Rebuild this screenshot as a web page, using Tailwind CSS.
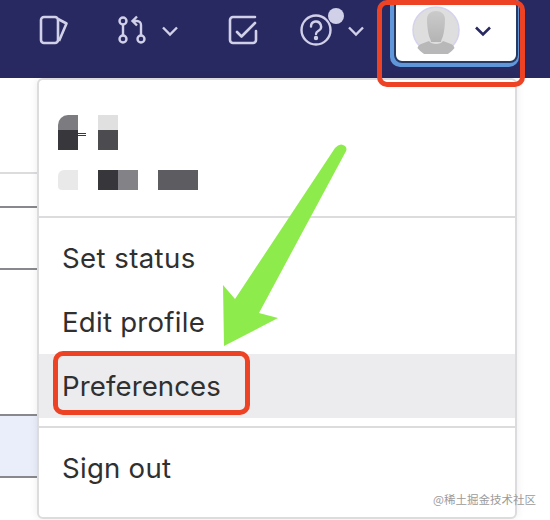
<!DOCTYPE html>
<html>
<head>
<script src="https://cdn.jsdelivr.net/npm/@tailwindcss/browser@4"></script>
</head>
<body class="bg-white">
<div class="relative w-[550px] h-[520px] overflow-hidden bg-white font-['Inter','Liberation_Sans',sans-serif] text-[#303030]">
  <!-- background table rows -->
  <div class="absolute left-0 top-[172px] w-[37px] h-[2px] bg-[#dcdcde]"></div>
  <div class="absolute left-0 top-[206px] w-[37px] h-[2px] bg-[#89888d]"></div>
  <div class="absolute left-0 top-[268px] w-[37px] h-[2px] bg-[#89888d]"></div>
  <div class="absolute left-0 top-[414px] w-[37px] h-[64px] bg-[#e9eefa] border-y-2 border-[#89888d]"></div>

  <!-- nav -->
  <header class="h-[78px] bg-[#292961] flex items-start text-[#d1d0e9]">
    <svg class="absolute left-[38px] top-[15px]" width="32" height="30" viewBox="0 0 32 30" fill="none" stroke="currentColor" stroke-width="2.6" stroke-linejoin="round"><rect x="3" y="2" width="17" height="26" rx="3"/><path d="M20 4l8.500 4.500L21 26"/></svg>
    <svg class="absolute left-[116px] top-[14px]" width="32" height="32" viewBox="0 0 32 32" fill="none" stroke="currentColor" stroke-width="2.400"><circle cx="7" cy="7" r="3.500"/><circle cx="7" cy="25" r="3.500"/><circle cx="25" cy="25" r="3.500"/><path d="M7 10.500v11M25 21.500V11a4 4 0 0 0-4-4h-3M21 2.500L16.500 7l4.500 4.500"/></svg>
    <svg class="absolute left-[161px] top-[25px]" width="18" height="12" viewBox="0 0 18 12" fill="none" stroke="currentColor" stroke-width="2.400"><path d="M2 2.500l7 7 7-7"/></svg>
    <svg class="absolute left-[227px] top-[15px]" width="32" height="30" viewBox="0 0 32 30" fill="none" stroke="currentColor" stroke-width="2.600" stroke-linecap="round" stroke-linejoin="round"><path d="M28 2H6a3 3 0 0 0-3 3v20a3 3 0 0 0 3 3h20a3 3 0 0 0 3-3v-9"/><path d="M10 17l4.500 4.500L28 8"/></svg>
    <svg class="absolute left-[299px] top-[13px]" width="34" height="34" viewBox="0 0 34 34" fill="none" stroke="currentColor" stroke-width="2.400" stroke-linecap="round"><circle cx="17" cy="17" r="14.500"/><path d="M12 13.500a5 5 0 1 1 7.500 4.300c-1.500.9-2.500 1.500-2.500 3.200"/><circle cx="17" cy="25" r="1" fill="currentColor"/></svg>
    <span class="absolute left-[328px] top-[8px] w-4 h-4 rounded-full bg-[#d1d0e9]"></span>
    <svg class="absolute left-[347px] top-[25px]" width="18" height="12" viewBox="0 0 18 12" fill="none" stroke="currentColor" stroke-width="2.400"><path d="M2 2.500l7 7 7-7"/></svg>

    <!-- user button -->
    <div class="absolute left-[390px] top-[-6px] w-[129px] h-[73px] rounded-[10px] bg-[#6097db] p-[4px] pr-[1px]">
      <div class="h-[65px] rounded-[8px] bg-white border-2 border-[#263a63] flex items-center pl-[16px] gap-[14px]">
        <svg class="mt-[-1px]" width="48" height="48" viewBox="0 0 48 48"><defs><linearGradient id="a" x1="0" y1="0" x2="0" y2="1"><stop offset="0" stop-color="#cbcbcb"/><stop offset="1" stop-color="#b4b4b4"/></linearGradient></defs><circle cx="24" cy="24" r="23" fill="#dedede" stroke="#d4d2ee" stroke-width="1.500"/><path d="M15 13c0-5 4-8 9-8s9 3 9 8c0 7-1 13-2 17-1 3-2 4-2 6h-10c0-2-1-3-2-6-1-4-2-10-2-17z" fill="url(#a)"/><path d="M17 35c1 2 4 3 7 3s6-1 7-3l8 3c2 1 3 2 3.500 4a23 23 0 0 1-37 0c.5-2 1.500-3 3.500-4z" fill="#b8b8b8"/></svg>
        <svg width="18" height="12" viewBox="0 0 18 12" fill="none" stroke="#292961" stroke-width="2.600"><path d="M2 2.500l7 7 7-7"/></svg>
      </div>
    </div>
  </header>

  <!-- dropdown -->
  <div class="absolute left-[37px] top-[78px] w-[480px] h-[441px] bg-white rounded-[6px] border-2 border-[#dcdcde] shadow-[0_0_8px_rgba(0,0,0,0.08)] flex flex-col">
    <div class="h-[138px] relative border-b-2 border-[#dcdcde] shrink-0">
      <!-- blurred name blocks -->
      <div class="absolute left-[19px] top-[35px] w-5 h-[15px] bg-[#7c7b80] rounded-tl-[10px]"></div>
      <div class="absolute left-[19px] top-[50px] w-5 h-5 bg-[#38373c]"></div>
      <div class="absolute left-[39px] top-[53px] w-2 h-px bg-[#38373c]"></div>
      <div class="absolute left-[39px] top-[55px] w-2 h-px bg-[#38373c]"></div>
      <div class="absolute left-[59px] top-[35px] w-5 h-[15px] bg-[#e0e0e0]"></div>
      <div class="absolute left-[59px] top-[50px] w-5 h-5 bg-[#4c4b50]"></div>
      <div class="absolute left-[19px] top-[90px] w-5 h-5 bg-[#e9e9e9] rounded-bl-[4px] rounded-tl-[6px]"></div>
      <div class="absolute left-[59px] top-[90px] w-5 h-5 bg-[#37363b]"></div>
      <div class="absolute left-[79px] top-[90px] w-5 h-5 bg-[#838286]"></div>
      <div class="absolute left-[119px] top-[90px] w-10 h-5 bg-[#5d5c61]"></div>
    </div>
    <div class="pt-2">
      <div class="h-16 pl-[23px] pt-[2px] flex items-center text-[27.6px] tracking-[0.4px]">Set status</div>
      <div class="h-16 pl-[23px] pt-[2px] flex items-center text-[27.6px] tracking-[0.25px]">Edit profile</div>
      <div class="h-16 pl-[23px] pt-[2px] flex items-center text-[27.6px] tracking-[0.1px] bg-[#ececef]">Preferences</div>
    </div>
    <div class="mt-2 border-t-2 border-[#dcdcde] pt-2">
      <div class="h-16 pl-[23px] pt-[2px] flex items-center text-[27.6px] tracking-[0.25px]">Sign out</div>
    </div>
  </div>

  <!-- annotations -->
  <div class="absolute left-[377px] top-0 w-[148px] h-[87px] rounded-[10px] border-[5px] border-[#ee4225]"></div>
  <div class="absolute left-[53px] top-[351px] w-[197px] h-[64px] rounded-[10px] border-[5px] border-[#ee4225]"></div>
  <svg class="absolute left-0 top-0" width="550" height="520" viewBox="0 0 550 520"><path d="M335 148Q340 142 345 146Q348 149 345 153L259 313L278 318L224 346L223 285L235 299Z" fill="#8dec4c"/></svg>
  <div class="absolute left-[433px] top-[489px] text-[11.500px] text-[#9b9b9b] font-['Noto_Sans_CJK_SC',sans-serif] leading-[20px]">@稀土掘金技术社区</div>
</div>
</body>
</html>
